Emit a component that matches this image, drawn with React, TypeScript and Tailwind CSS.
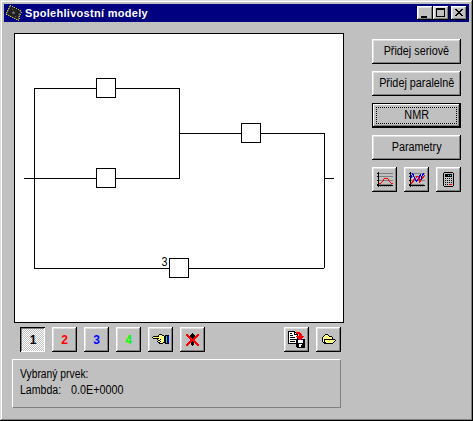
import type { ReactNode } from "react";

const raised =
  "shadow-[inset_-1px_-1px_0_#000,inset_1px_1px_0_#fff,inset_-2px_-2px_0_#808080,inset_2px_2px_0_#dfdfdf]";

function PushButton({ label, focused = false }: { label: string; focused?: boolean }) {
  return (
    <button
      className={`relative flex h-[25px] w-[89px] items-center justify-center bg-[#c0c0c0] pb-px text-[12px] leading-none whitespace-nowrap ${
        focused
          ? "shadow-[inset_0_0_0_1px_#000,inset_-2px_-2px_0_#000,inset_2px_2px_0_#fff,inset_-3px_-3px_0_#808080]"
          : raised
      }`}
    >
      <span className="scale-x-[0.9]">{label}</span>
      {focused && <span className="absolute inset-1 border border-dotted border-black" />}
    </button>
  );
}

function ToolButton({ children, pressed = false }: { children: ReactNode; pressed?: boolean }) {
  return (
    <button
      className={`flex size-[25px] items-center justify-center text-[12px] leading-none font-bold ${
        pressed
          ? "bg-[#dfdfdf] bg-[repeating-conic-gradient(#fff_0_25%,#c0c0c0_0_50%)] bg-[length:2px_2px] pt-px pl-px shadow-[inset_1px_1px_0_#000,inset_-1px_-1px_0_#fff,inset_2px_2px_0_#808080]"
          : `bg-[#c0c0c0] ${raised}`
      }`}
    >
      {children}
    </button>
  );
}

// Draws a bitmap icon; every character of a row is one pixel.
const palette: Record<string, string> = {
  k: "#000000",
  w: "#ffffff",
  g: "#808080",
  r: "#ff0000",
  b: "#0000ff",
  y: "#ffff40",
  p: "#ffffc0",
  o: "#c8c020",
  c: "#00e0e0",
  t: "#008080",
  d: "#202020",
  m: "#5c5c5c",
  l: "#c0c0c0",
};

function Bitmap({ rows }: { rows: string[] }) {
  const width = Math.max(...rows.map((r) => r.length));
  return (
    <svg width={width} height={rows.length} shapeRendering="crispEdges" className="shrink-0">
      {rows.flatMap((row, y) =>
        [...row].map((c, x) => (palette[c] ? <rect key={`${x}-${y}`} x={x} y={y} width="1" height="1" fill={palette[c]} /> : null)),
      )}
    </svg>
  );
}

const chip = [
  "....o...........",
  "...omdo.........",
  "...mdddmo.......",
  "..omddddddo.....",
  "..mdddmdddddo...",
  ".omddddddddddmo.",
  ".mdddddmddddddm.",
  "omddddmgmdddddmo",
  "mdddddmmmddddm..",
  "omddddddddddmmo.",
  "..omdddddddddm..",
  "....omdddmddmo..",
  "......omddddm...",
  "........omddmo..",
  "..........omm...",
  "............o...",
];

const curveChart = [
  "..k..............",
  ".kkgggggggggggggg",
  "..k..............",
  "..k..............",
  ".kkgggggggggggggg",
  "..k..............",
  "..k.....rrrr.....",
  "..k....r....r....",
  ".kkggggrggggrgggg",
  "..k...r......r...",
  "..k..r........r..",
  "..krr..........rr",
  ".kkggggggggggggg.",
  ".kkkkkkkkkkkkkkkk",
  "..k.g.g.g.g.g.g..",
];

const multiChart = [
  "..k..............",
  ".kkgbggggggggggbg",
  "..k.bb......b.bb.",
  "..kb.b.....bb.b.r",
  ".kkbgbggrrrbgbgrg",
  "..kb..b.r.rb.brr.",
  "..k...br..br.br..",
  "..k..rrb.brrrb...",
  ".kkggrgbbbgrrgggg",
  "..k.rr..b..rr....",
  "..krr......r.....",
  "..kr.............",
  ".kkggggggggggggg.",
  ".kkkkkkkkkkkkkkkk",
  "..k.g.g.g.g.g.g..",
];

const calculator = [
  ".kkkkkkkkk.",
  "klllllllllk",
  "klkkkkkkklk",
  "klkkkckcklk",
  "klkkkkkkklk",
  "klllllllllk",
  "klklklklklk",
  "klllllllllk",
  "klklklklklk",
  "klllllllllk",
  "klklklklklk",
  "klllllllllk",
  "klklklrrrlk",
  "klllllllllk",
  ".kkkkkkkkk.",
];

const hand = [
  ".......kkk.......",
  "......kyypkk.kkkk",
  ".kkkkkkypyppkkckb",
  "kypypypypypykkckb",
  ".kkkkkkpypypkkckb",
  ".....kypkpypkkckb",
  "......kkypypkkckb",
  ".....kypkypykkckb",
  "......kkypykkkckb",
  ".......kkkk..kkkk",
  ".................",
];

const deleteElement = [
  "......k......",
  "rr...kkk...rr",
  "rrr.kkkkk.rrr",
  ".rrrkkkkkrrr.",
  "..rrrkkkrrr..",
  "...rrrkrrr...",
  "....rrrrr....",
  "....rrrrr....",
  "...rrrkrrr...",
  "..rrrkkkrrr..",
  ".rrr.kkk.rrr.",
  "rrr..kkk..rrr",
  "rr....k....rr",
];

const saveAs = [
  "kkkkkkk..........",
  "kwwwwwkkrrrr.....",
  "kwkkwwkwrrrrr....",
  "kwwwwwkkkk.rrr...",
  "kwkkkwwwwk.rrr...",
  "kwwwwwwwrrrrrrrr.",
  "kwkkkkkwwrrrrrr..",
  "kwwwwwwwwkrrrr...",
  "kwkkkkkkkkbrrbkkk",
  "kwwwwwwwkkwwwwwkk",
  "kwkkkkkwkkwwwwwkk",
  "kwwwwwwwkkwwwwwkk",
  "kkkkkkkkkkkkkkkkk",
  "........kkkwwwkkk",
  "........kkkwwkkkk",
  "........kkkwwkkkk",
  ".........kkkkkkkk",
];

const folder = [
  "....kkk........",
  "...kypyk.......",
  "..kypypykkk....",
  ".kypypypypyk...",
  ".kpypypypypk...",
  ".kykkkkkkkkkkk.",
  ".kpkypypypypypk",
  ".kykpypypypypk.",
  "..kkkypypypyk..",
  "...kkkkkkkkk...",
  "...............",
];

function Caption({ children }: { children: ReactNode }) {
  return (
    <span className={`flex h-[14px] w-4 items-center justify-center bg-[#c0c0c0] ${raised}`}>{children}</span>
  );
}

function Diagram() {
  return (
    <svg width="328" height="288" viewBox="15 34 328 288" shapeRendering="crispEdges" className="block">
      <g fill="none" stroke="#000" strokeWidth="1">
        <path d="M24 178.5H180M34.5 88V269M34 88.5H180M179.5 88V178M179 133.5H325M324.5 133V268M324 178.5H334M34 268.5H324" />
        <g fill="#fff">
          <rect x="96.5" y="78.5" width="19" height="19" />
          <rect x="96.5" y="168.5" width="19" height="19" />
          <rect x="241.5" y="123.5" width="19" height="19" />
          <rect x="169.5" y="258.5" width="19" height="19" />
        </g>
      </g>
      <text x="161.5" y="266" fontSize="12" textLength="6" lengthAdjust="spacingAndGlyphs">
        3
      </text>
    </svg>
  );
}

export default function App() {
  return (
    <main className="flex h-[421px] w-[473px] flex-col bg-[#c0c0c0] p-1 font-['Liberation_Sans',Arial,sans-serif] text-[12px] text-black shadow-[inset_-1px_-1px_0_#000,inset_1px_1px_0_#dfdfdf,inset_-2px_-2px_0_#808080,inset_2px_2px_0_#fff]">
      <header className="flex h-[18px] shrink-0 items-center bg-[#000080] px-0.5">
        <Bitmap rows={chip} />
        <h1 className="ml-[3px] flex-1 text-[11px] leading-none font-bold tracking-[0.3px] whitespace-nowrap text-white">
          Spolehlivostní modely
        </h1>
        <div className="flex">
          <Caption>
            <span className="mt-[7px] mr-[2px] h-0.5 w-1.5 bg-black" />
          </Caption>
          <Caption>
            <span className="mr-px mb-px h-[9px] w-[9px] border border-t-2 border-black" />
          </Caption>
          <span className="w-0.5" />
          <Caption>
            <Bitmap rows={["kk....kk", ".kk..kk.", "..kkkk..", "...kk...", "..kkkk..", ".kk..kk.", "kk....kk", "........"]} />
          </Caption>
        </div>
      </header>
      <div className="flex pl-2.5">
        <section className="mt-[11px] w-[330px]">
          <div className="h-[290px] border border-black bg-white">
            <Diagram />
          </div>
          <div className="mt-1 ml-1.5 flex gap-[7px]">
            <ToolButton pressed>1</ToolButton>
            <ToolButton>
              <span className="text-[#ff0000]">2</span>
            </ToolButton>
            <ToolButton>
              <span className="text-[#0000ff]">3</span>
            </ToolButton>
            <ToolButton>
              <span className="text-[#00ff00]">4</span>
            </ToolButton>
            <ToolButton>
              <Bitmap rows={hand} />
            </ToolButton>
            <ToolButton>
              <Bitmap rows={deleteElement} />
            </ToolButton>
            <div className="mr-[3px] ml-auto flex gap-[7px]">
              <ToolButton>
                <Bitmap rows={saveAs} />
              </ToolButton>
              <ToolButton>
                <Bitmap rows={folder} />
              </ToolButton>
            </div>
          </div>
          <div className="mt-[7px] -ml-0.5 h-[49px] w-[329px] border border-t-white border-r-[#808080] border-b-[#808080] border-l-white pt-[6px] pl-[7px] leading-4">
            <p className="origin-left scale-x-[0.86]">Vybraný prvek:</p>
            <p className="flex">
              <span className="w-[51px] origin-left scale-x-[0.88]">Lambda:</span>
              <span className="origin-left scale-x-[0.9]">0.0E+0000</span>
            </p>
          </div>
        </section>
        <aside className="mt-[17px] ml-7 flex flex-col gap-[7px]">
          <PushButton label="Přidej seriově" />
          <PushButton label="Přidej paralelně" />
          <PushButton label="NMR" focused />
          <PushButton label="Parametry" />
          <div className="flex gap-[7px]">
            <ToolButton>
              <Bitmap rows={curveChart} />
            </ToolButton>
            <ToolButton>
              <Bitmap rows={multiChart} />
            </ToolButton>
            <ToolButton>
              <Bitmap rows={calculator} />
            </ToolButton>
          </div>
        </aside>
      </div>
    </main>
  );
}
